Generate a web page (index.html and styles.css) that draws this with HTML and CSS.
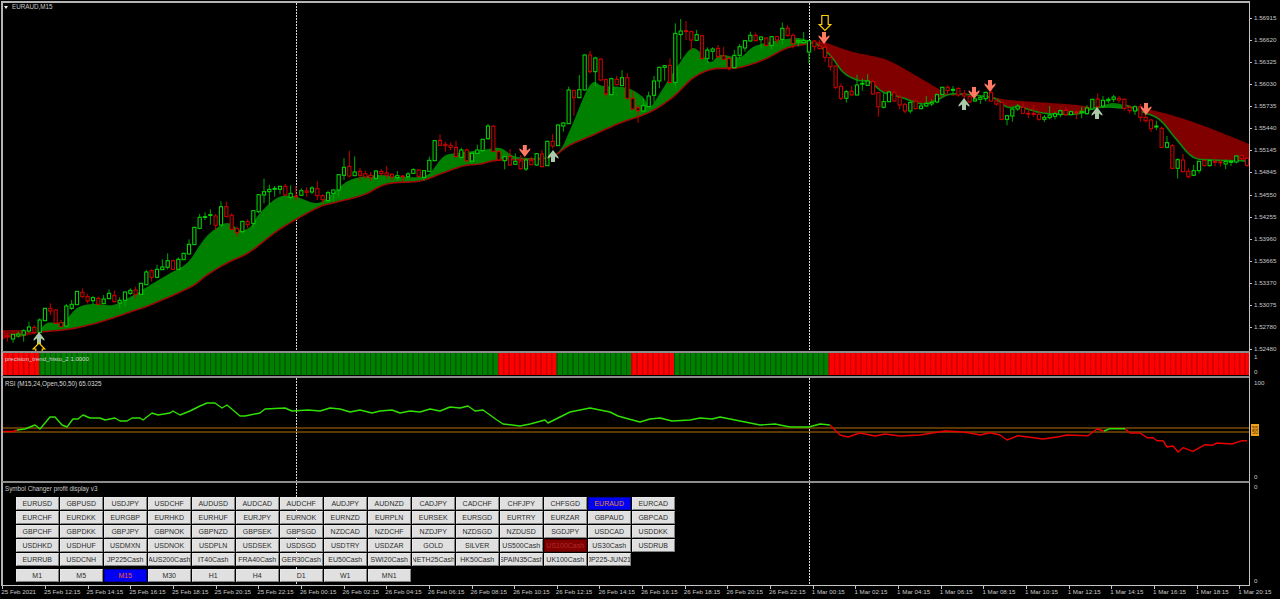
FILE: index.html
```html
<!DOCTYPE html>
<html lang="en">
<head>
<meta charset="utf-8">
<title>EURAUD,M15</title>
<link rel="stylesheet" href="styles.css">
</head>
<body>
<main class="terminal">
  <section class="pane pane-main">
    <div class="plot plot-main">
      <div class="vline vline-a"></div><div class="vline vline-b"></div>
      <svg class="canvas" id="price" width="1246" height="348" viewBox="3 3 1246 348"></svg>
      <div class="chart-title"><span class="chart-caret"></span>EURAUD,M15</div>
    </div>
    <div class="axis axis-price">
      <div class="price">1.56915</div><div class="price">1.56620</div><div class="price">1.56325</div><div class="price">1.56030</div>
      <div class="price">1.55735</div><div class="price">1.55440</div><div class="price">1.55145</div><div class="price">1.54845</div>
      <div class="price">1.54550</div><div class="price">1.54255</div><div class="price">1.53960</div><div class="price">1.53665</div>
      <div class="price">1.53370</div><div class="price">1.53075</div><div class="price">1.52780</div><div class="price">1.52480</div>
    </div>
  </section>

  <section class="pane pane-histo">
    <div class="plot plot-histo">
      <svg class="canvas" id="histo" width="1246" height="22" viewBox="3 353 1246 22"></svg>
      <div class="sub-title sub-title-tight">precision_trend_histo_2 1.0000</div>
    </div>
    <div class="axis axis-histo"><div class="price">1</div><div class="price">0</div></div>
  </section>

  <section class="pane pane-rsi">
    <div class="plot plot-rsi">
      <div class="vline vline-a"></div><div class="vline vline-b"></div>
      <svg class="canvas" id="rsi" width="1246" height="103" viewBox="3 378 1246 103"></svg>
      <div class="sub-title">RSI (M15,24,Open,50,50) 65.0325</div>
    </div>
    <div class="axis axis-pair">
      <div class="price">100</div><div class="price">0</div>
      <div class="level-tag"><span>55</span><span>50</span></div>
    </div>
  </section>

  <section class="pane pane-panel">
    <div class="plot plot-panel">
      <div class="vline vline-a"></div><div class="vline vline-b"></div>
      <div class="panel-title">Symbol Changer profit display v3</div>
      <div class="btn-grid">
        <div class="btn">EURUSD</div><div class="btn">GBPUSD</div><div class="btn">USDJPY</div><div class="btn">USDCHF</div><div class="btn">AUDUSD</div><div class="btn">AUDCAD</div><div class="btn">AUDCHF</div><div class="btn">AUDJPY</div><div class="btn">AUDNZD</div><div class="btn">CADJPY</div><div class="btn">CADCHF</div><div class="btn">CHFJPY</div><div class="btn">CHFSGD</div><div class="btn btn-blue">EURAUD</div><div class="btn">EURCAD</div>
        <div class="btn">EURCHF</div><div class="btn">EURDKK</div><div class="btn">EURGBP</div><div class="btn">EURHKD</div><div class="btn">EURHUF</div><div class="btn">EURJPY</div><div class="btn">EURNOK</div><div class="btn">EURNZD</div><div class="btn">EURPLN</div><div class="btn">EURSEK</div><div class="btn">EURSGD</div><div class="btn">EURTRY</div><div class="btn">EURZAR</div><div class="btn">GBPAUD</div><div class="btn">GBPCAD</div>
        <div class="btn">GBPCHF</div><div class="btn">GBPDKK</div><div class="btn">GBPJPY</div><div class="btn">GBPNOK</div><div class="btn">GBPNZD</div><div class="btn">GBPSEK</div><div class="btn">GBPSGD</div><div class="btn">NZDCAD</div><div class="btn">NZDCHF</div><div class="btn">NZDJPY</div><div class="btn">NZDSGD</div><div class="btn">NZDUSD</div><div class="btn">SGDJPY</div><div class="btn">USDCAD</div><div class="btn">USDDKK</div>
        <div class="btn">USDHKD</div><div class="btn">USDHUF</div><div class="btn">USDMXN</div><div class="btn">USDNOK</div><div class="btn">USDPLN</div><div class="btn">USDSEK</div><div class="btn">USDSGD</div><div class="btn">USDTRY</div><div class="btn">USDZAR</div><div class="btn">GOLD</div><div class="btn">SILVER</div><div class="btn">US500Cash</div><div class="btn btn-maroon">US100Cash</div><div class="btn">US30Cash</div><div class="btn">USDRUB</div>
        <div class="btn">EURRUB</div><div class="btn">USDCNH</div><div class="btn">JP225Cash</div><div class="btn">AUS200Cash</div><div class="btn">IT40Cash</div><div class="btn">FRA40Cash</div><div class="btn">GER30Cash</div><div class="btn">EU50Cash</div><div class="btn">SWI20Cash</div><div class="btn">NETH25Cash</div><div class="btn">HK50Cash</div><div class="btn">SPAIN35Cash</div><div class="btn">UK100Cash</div><div class="btn">JP225-JUN21</div>
      </div>
      <div class="btn-grid btn-grid-tf">
        <div class="btn">M1</div><div class="btn">M5</div><div class="btn btn-blue btn-hot">M15</div><div class="btn">M30</div><div class="btn">H1</div><div class="btn">H4</div><div class="btn">D1</div><div class="btn">W1</div><div class="btn">MN1</div>
      </div>
    </div>
    <div class="axis axis-pair"><div class="price">0</div><div class="price">0</div></div>
  </section>

  <footer class="time-axis">
    <div class="time">25 Feb 2021</div><div class="time">25 Feb 12:15</div><div class="time">25 Feb 14:15</div><div class="time">25 Feb 16:15</div><div class="time">25 Feb 18:15</div><div class="time">25 Feb 20:15</div><div class="time">25 Feb 22:15</div>
    <div class="time">26 Feb 00:15</div><div class="time">26 Feb 02:15</div><div class="time">26 Feb 04:15</div><div class="time">26 Feb 06:15</div><div class="time">26 Feb 08:15</div><div class="time">26 Feb 10:15</div><div class="time">26 Feb 12:15</div><div class="time">26 Feb 14:15</div><div class="time">26 Feb 16:15</div><div class="time">26 Feb 18:15</div><div class="time">26 Feb 20:15</div><div class="time">26 Feb 22:15</div>
    <div class="time">1 Mar 00:15</div><div class="time">1 Mar 02:15</div><div class="time">1 Mar 04:15</div><div class="time">1 Mar 06:15</div><div class="time">1 Mar 08:15</div><div class="time">1 Mar 10:15</div><div class="time">1 Mar 12:15</div><div class="time">1 Mar 14:15</div><div class="time">1 Mar 16:15</div><div class="time">1 Mar 18:15</div><div class="time">1 Mar 20:15</div>
  </footer>
</main>
<script src="chart.js"></script>
</body>
</html>
```
FILE: styles.css
```css
* { box-sizing: border-box; }
html, body { margin: 0; padding: 0; background: #000; overflow: hidden; }
body { font-family: "Liberation Sans", Arial, sans-serif; color: #c8c8c8; }

.terminal { width: 1280px; height: 599px; padding-top: 1px; display: flex; flex-direction: column; }
.pane { display: flex; flex: none; }
.pane-main { height: 350px; }
.pane-histo { height: 25px; }
.pane-rsi { height: 105px; }
.pane-panel { height: 105px; }

.plot {
  width: 1249px; margin-left: 1px; position: relative; overflow: hidden;
  border-left: 2px solid #b4b4b4; border-right: 1px solid #c4c4c4; border-top: 2px solid #8c8c8c;
}
.plot-main { border-top-color: #b4b4b4; }
.plot-panel { border-bottom: 1px solid #c4c4c4; }
.canvas { display: block; position: relative; }

.axis { width: 30px; flex: none; font-size: 6.2px; position: relative; }
.price { white-space: nowrap; padding-left: 4px; position: relative; }
.axis-price { padding-top: 6px; }
.axis-price .price { height: 22.07px; line-height: 22.07px; }
.axis-price .price::before {
  content: ""; position: absolute; left: 0; top: 11px; width: 2px; height: 1px; background: #c4c4c4;
}
.axis-histo { display: flex; flex-direction: column; gap: 3px; line-height: 12px; }
.axis-pair { display: flex; flex-direction: column; gap: 82px; line-height: 12px; padding-top: 0; }
.pane-rsi .axis-pair { padding-top: 1px; }
.level-tag {
  position: absolute; left: 1px; top: 48px; width: 8px; height: 12px; background: #f0a018;
  display: flex; flex-direction: column; align-items: center; justify-content: center;
  color: #5a3a00; font-size: 5.5px; line-height: 4.5px;
}

.chart-title { position: absolute; left: 1px; top: 0; line-height: 8px; font-size: 6.3px; display: flex; align-items: center; gap: 4px; white-space: nowrap; }
.chart-caret { width: 0; height: 0; border-left: 2.5px solid transparent; border-right: 2.5px solid transparent; border-top: 3px solid #eee; }
.sub-title { position: absolute; left: 2px; top: 2px; line-height: 8px; font-size: 6.3px; color: #d8d8d8; white-space: nowrap; }
.sub-title-tight { font-size: 6px; }

.vline {
  position: absolute; top: 0; bottom: 0; width: 1px;
  background: repeating-linear-gradient(to bottom, #d8d8d8 0 2px, transparent 2px 3px);
}
.vline-a { left: 293px; }
.vline-b { left: 806px; }

.panel-title { position: relative; margin-top: 2px; padding-left: 2px; line-height: 8px; font-size: 6.3px; white-space: nowrap; }
.btn-grid { position: relative; margin: 4px 0 0 12.5px; display: grid; grid-template-columns: repeat(15, 44px); grid-auto-rows: 14px; }
.btn-grid-tf { margin-top: 2px; }
.btn {
  margin: 0 .6px .6px 0; background: #e0e0e0; color: #2c2c2c; font-size: 7px; line-height: 11px;
  border: 1px solid; border-color: #e8e8e8 #808080 #808080 #e8e8e8;
  display: flex; justify-content: center; overflow: hidden; white-space: nowrap;
}
.btn-blue { background: #0000f4; border-color: #0000a8; color: #e08a30; }
.btn-hot { color: #ff5a1e; }
.btn-maroon { background: #800000; border-color: #580000; color: #b42a2a; }

.time-axis { height: 13px; flex: none; display: flex; padding-left: 1.3px; }
.time { width: 42.667px; flex: none; position: relative; white-space: nowrap; font-size: 6.2px; line-height: 11px; padding-top: 0; }
.time::before { content: ""; position: absolute; left: 1px; top: 0; width: 1px; height: 2.5px; background: #c4c4c4; }

/* chart drawing */
.cloud-up { fill: #008000; }
.cloud-down { fill: #800000; }
.edge { fill: none; stroke-width: 1.6; stroke-linejoin: round; }
.edge-slow { stroke: #9c0808; }
.edge-fast { stroke: #0a8c0a; }
.wick-up { stroke: #00a800; stroke-width: 1; }
.wick-down { stroke: #c80000; stroke-width: 1; }
.body-up { fill: #000; stroke: #00d800; stroke-width: 1.05; }
.body-down { fill: #000; stroke: #d00000; stroke-width: 1.05; }
.arrow-sell { fill: #ff7a62; }
.arrow-buy { fill: #a9c9a9; }
.arrow-signal { fill: none; stroke: #ffd000; stroke-width: 1.2; }
.bar-up { fill: #008000; }
.bar-up-shade { fill: #005a00; }
.bar-down { fill: #ff0000; }
.bar-down-shade { fill: #c40000; }
.level { stroke: #b87000; stroke-width: 1.2; }
.rsi-up { fill: none; stroke: #30e000; stroke-width: 1.4; stroke-linejoin: round; }
.rsi-down { fill: none; stroke: #e80000; stroke-width: 1.4; stroke-linejoin: round; }
```
FILE: chart.js
```js
var NS = "http://www.w3.org/2000/svg";
function el(parent, name, cls, attrs) {
  var n = document.createElementNS(NS, name);
  if (cls) n.setAttribute("class", cls);
  for (var k in attrs) n.setAttribute(k, attrs[k]);
  parent.appendChild(n);
  return n;
}
function pts(a) { return a.map(function (p) { return p[0] + "," + p[1]; }).join(" "); }

/* Catmull-Rom resampling: turns the measured key points into a smooth curve */
function smooth(a) {
  var out = [];
  for (var i = 0; i < a.length - 1; i++) {
    var p0 = a[Math.max(i - 1, 0)], p1 = a[i], p2 = a[i + 1], p3 = a[Math.min(i + 2, a.length - 1)];
    var n = Math.max(2, Math.round((p2[0] - p1[0]) / 2.5));
    for (var s = 0; s < n; s++) {
      var t = s / n, t2 = t * t, t3 = t2 * t;
      var f = function (q0, q1, q2, q3) {
        return 0.5 * (2 * q1 + (q2 - q0) * t + (2 * q0 - 5 * q1 + 4 * q2 - q3) * t2 + (3 * q1 - q0 - 3 * q2 + q3) * t3);
      };
      out.push([+f(p0[0], p1[0], p2[0], p3[0]).toFixed(1), +f(p0[1], p1[1], p2[1], p3[1]).toFixed(1)]);
    }
  }
  out.push(a[a.length - 1]);
  return out;
}

/* --- trend cloud --- */
var slow = smooth([[38,333],[43,331.7],[70,329],[100,322],[130,312],[150,305],[190,287.3],[207,275],[227,263],[250,251.7],[280,229],[317,208],[333,203],[363,195],[387,184],[420,181],[440,174],[463,166],[480,164],[500,160],[547,158],[570,145],[593,135],[620,123],[650,112],[673,97],[693,78],[713,69],[737,68],[763,60],[787,48],[807,44],[815,43]]);
var fast = smooth([[38,333],[47,323],[63,322],[77,308],[93,304],[113,305],[130,297],[147,287],[167,275],[187,263],[200,245],[210,233],[227,223],[240,230],[250,227],[260,213],[277,198],[293,196],[317,203],[333,193],[350,180],[377,175],[403,177],[427,175],[443,157],[457,153],[483,150],[500,148],[517,157],[547,157],[560,150],[570,130],[590,85],[603,86],[627,88],[643,97],[650,107],[662,90],[677,67],[693,48],[710,62],[720,55],[740,57],[753,47],[770,42],[797,38],[815,43]]);
var downLow = smooth([[815,43],[830,55],[843,72],[857,80],[870,82],[883,92],[903,98],[923,104],[937,100],[947,95],[960,94],[993,98],[1007,107],[1020,107],[1043,113],[1077,114],[1093,108]]);
var downHigh = smooth([[815,43],[823,42],[853,52],[887,60],[920,78],[950,95],[960,94],[993,97],[1010,100],[1077,105],[1093,108]]);
var midHigh = smooth([[1093,108],[1105,105],[1113,103],[1125,105]]);
var midLow = smooth([[1093,108],[1110,107],[1123,108],[1125,105]]);
var tailHigh = smooth([[1125,105],[1160,112],[1193,122],[1227,135],[1249,144]]);
var tailLow = smooth([[1125,105],[1143,112],[1160,120],[1177,140],[1193,157],[1213,160],[1249,161]]);
var startCloud = [[3,330],[20,330],[38,333],[20,337],[3,338]];

function band(svg, cls, top, bottom) {
  el(svg, "polygon", cls, { points: pts(top.concat(bottom.slice().reverse())) });
}

/* --- candles: [x, bodyTop, bodyBottom, high, low, up], measured at 3x --- */
var candleSets = [
  [0, 180, [[7,455,475,455,475,0],[22,468,470,460,485,0],[39,463,477,463,488,1],[55,462,468,455,473,1],[71,452,465,448,485,1],[87,441,453,425,458,1],[103,442,458,435,460,0],[119,420,457,415,460,1],[135,385,422,383,424,1],[151,385,393,370,405,0],[167,390,430,388,432,0],[183,428,440,420,441,0],[199,378,438,372,441,1],[215,373,385,360,390,1],[231,334,374,334,375,1],[247,337,350,325,353,0],[263,350,363,342,370,0],[279,353,362,348,375,1],[295,355,373,350,376,0],[311,357,371,345,373,1],[327,340,356,328,358,1],[343,346,365,332,368,0],[359,361,369,352,385,1],[375,336,361,334,380,1],[391,331,340,325,345,1],[407,330,343,320,355,0],[423,310,343,308,345,1],[439,276,314,270,316,1],[455,272,292,268,305,0],[471,268,292,254,295,1],[487,261,269,238,270,1],[503,242,262,220,268,1],[519,242,268,238,270,0],[535,238,268,232,270,1],[551,220,239,218,240,1],[567,193,222,178,224,1],[583,142,194,140,195,1],[599,112,145,102,148,1],[615,110,112,97,120,1],[631,104,106,88,134,1],[647,108,136,102,150,0],[663,80,135,64,140,1],[679,80,110,65,112,0],[695,106,148,100,150,0],[711,146,158,140,170,0],[727,124,155,122,160,1],[743,125,134,118,145,0]]],
  [250, 100, [[10,332,370,330,382,1],[26,284,335,282,340,1],[42,275,285,236,310,1],[58,268,275,254,315,1],[74,265,268,258,290,1],[90,259,268,257,283,1],[106,259,285,252,288,0],[122,280,292,256,298,1],[138,288,290,258,302,0],[154,272,286,265,288,1],[170,273,277,262,290,0],[186,264,276,258,282,1],[202,266,287,244,300,0],[218,287,299,283,310,0],[234,278,302,272,305,1],[250,270,280,268,305,1],[266,224,270,222,290,1],[282,202,226,174,240,1],[298,199,228,152,232,0],[314,216,227,169,228,1],[330,214,226,204,242,0],[346,221,231,212,235,0],[362,226,233,216,243,0],[378,213,235,211,236,1],[394,214,221,208,228,0],[410,219,226,198,236,0],[426,223,231,220,242,0],[442,227,233,213,242,1],[458,228,229,225,246,0],[474,222,230,216,236,1],[490,209,220,205,222,1],[506,210,229,208,232,0],[522,212,232,210,242,1],[538,181,214,170,216,1],[554,122,182,120,184,1],[570,121,136,103,138,0],[586,133,137,125,155,0],[602,136,142,127,150,0],[618,142,170,122,172,0],[634,150,172,143,174,1],[650,150,182,146,185,0],[666,160,183,156,185,1],[682,150,160,134,162,1],[698,118,152,116,155,1],[714,78,116,72,120,1],[730,79,154,75,156,0],[746,155,180,150,182,0]]],
  [480, 10, [[74,440,452,437,478,1],[90,440,465,417,468,0],[106,454,463,430,465,1],[122,453,476,435,478,0],[138,450,477,445,483,1],[154,452,464,440,466,0],[170,431,465,430,467,1],[186,432,470,420,472,0],[202,394,467,392,468,1],[218,394,408,372,415,0],[234,345,407,342,408,1],[250,339,348,336,365,1],[266,240,341,230,342,1],[282,241,263,240,317,0],[298,239,263,195,265,1],[314,135,240,133,242,1],[330,135,185,123,190,0],[346,144,185,140,230,1],[362,147,210,145,212,0],[378,209,252,205,260,0],[394,206,254,203,255,1],[410,208,224,197,226,0],[426,203,227,180,228,1],[442,203,265,190,268,0],[458,265,297,245,299,0],[474,293,302,285,338,0],[490,287,303,265,305,1],[506,258,290,245,291,1],[522,213,256,198,280,1],[538,172,213,170,235,1],[554,167,172,165,212,1],[570,166,217,145,219,0],[586,70,217,40,232,1],[602,63,74,27,148,1],[618,62,64,33,90,0],[634,65,90,62,122,0],[650,74,91,60,93,1],[666,77,145,75,148,0],[682,120,146,112,160,1],[698,117,124,112,150,1],[714,115,140,105,145,0]]],
  [720, 0, [[11,168,178,140,180,0],[27,176,202,170,212,0],[43,166,203,150,205,1],[59,140,166,132,178,1],[75,122,144,120,155,1],[91,106,123,95,125,1],[107,106,122,98,124,0],[123,111,119,108,146,1],[139,114,136,112,140,0],[155,110,136,108,148,1],[171,110,120,107,130,0],[187,85,118,68,135,1],[203,85,107,76,109,0],[219,106,130,100,145,0],[235,122,126,115,140,1],[251,122,128,96,130,1],[267,122,156,120,190,1],[283,123,140,120,152,0],[299,138,146,120,148,0],[315,142,172,120,185,0],[331,173,200,165,212,0],[347,198,262,195,268,0],[363,259,295,250,300,0],[379,275,295,270,308,1],[395,274,285,258,286,0],[411,255,285,224,286,1],[427,250,252,235,272,1],[443,243,256,222,258,1],[459,245,282,238,285,0],[475,278,320,275,350,0],[491,305,322,278,325,1],[507,276,305,272,307,1],[523,278,303,272,306,0],[539,292,315,285,328,0],[555,313,333,308,340,0],[571,307,333,305,340,1],[587,305,326,298,328,0],[603,318,326,308,328,1],[619,310,318,288,320,1],[635,307,312,298,318,1],[651,284,306,280,310,1],[667,262,284,260,286,1],[683,262,272,256,284,0],[699,268,271,258,282,1],[715,265,285,263,290,0]]],
  [960, 0, [[13,281,288,270,300,0],[29,290,306,284,308,0],[45,297,303,285,306,1],[61,292,298,288,312,1],[77,277,296,275,304,1],[93,278,303,265,305,0],[109,303,312,297,318,0],[125,308,358,305,360,0],[141,347,358,345,376,1],[157,327,348,323,365,1],[173,318,327,312,332,1],[189,322,340,308,342,0],[205,340,342,325,354,0],[221,340,343,315,350,0],[237,343,358,335,362,0],[253,352,358,345,366,1],[269,345,353,318,358,1],[285,341,349,335,358,1],[301,332,344,328,352,1],[317,331,344,322,348,0],[333,335,344,332,346,1],[349,336,339,330,358,0],[365,334,338,320,355,1],[381,324,341,316,345,1],[397,298,327,296,330,1],[413,297,320,280,326,0],[429,301,318,288,322,1],[445,298,302,292,310,1],[461,291,298,285,306,1],[477,295,300,288,308,0],[493,298,325,295,332,0],[509,322,332,315,340,0],[525,320,333,316,345,1],[541,320,352,312,365,0],[557,352,362,340,368,0],[573,360,386,356,396,0],[589,378,381,362,390,1],[605,385,442,380,444,0],[621,428,442,408,445,1],[637,437,505,432,508,0],[653,479,505,475,536,1],[669,480,515,462,517,0],[685,514,530,505,535,0],[701,512,526,495,528,1],[717,484,512,482,520,1],[733,482,497,478,500,0],[749,482,497,480,499,1],[765,484,487,478,498,0],[781,486,488,480,500,0],[797,484,492,478,507,1],[813,484,487,480,498,1],[829,468,486,465,490,1],[845,467,475,464,480,0],[861,475,496,472,500,0]]]
];

function drawCandles(svg) {
  candleSets.forEach(function (set) {
    var ox = set[0], oy = set[1];
    set[2].forEach(function (c) {
      var x = ox + c[0] / 3, t = oy + c[1] / 3, b = oy + c[2] / 3;
      var h = oy + c[3] / 3, l = oy + c[4] / 3, dir = c[5] ? "up" : "down";
      el(svg, "line", "wick-" + dir, { x1: x, x2: x, y1: h, y2: l });
      el(svg, "rect", "body-" + dir, { x: x - 1.6, y: t, width: 3.2, height: Math.max(b - t, 0.8) });
    });
  });
}

/* --- signal arrows: swept head, heavy stem --- */
function sell(svg, x, y) {
  el(svg, "polygon", "arrow-sell", { points: pts([[x-2,y],[x+2,y],[x+2,y+5.6],[x+5.4,y+3.2],[x+5.4,y+5],[x,y+12],[x-5.4,y+5],[x-5.4,y+3.2],[x-2,y+5.6]]) });
}
function buy(svg, x, y) {
  el(svg, "polygon", "arrow-buy", { points: pts([[x-2,y+12],[x+2,y+12],[x+2,y+6.4],[x+5.4,y+8.8],[x+5.4,y+7],[x,y],[x-5.4,y+7],[x-5.4,y+8.8],[x-2,y+6.4]]) });
}
function signal(svg, x, y, dir) {
  var shape = [[-3.2,0],[3.2,0],[3.2,9],[5.8,9],[0,15],[-5.8,9],[-3.2,9]];
  el(svg, "polygon", "arrow-signal", { points: pts(shape.map(function (p) { return [x + p[0], y + dir * p[1]]; })) });
}

var price = document.getElementById("price");
el(price, "polygon", "cloud-down", { points: pts(startCloud) });
band(price, "cloud-up", fast, slow);
band(price, "cloud-down", downHigh, downLow);
band(price, "cloud-up", midHigh, midLow);
band(price, "cloud-down", tailHigh, tailLow);
el(price, "polyline", "edge edge-slow", { points: pts(slow) });
el(price, "polyline", "edge edge-fast", { points: pts(downLow.concat(midLow.slice(1), tailLow.slice(1))) });
drawCandles(price);
[[524.8,145],[824,32],[974,87],[990,80],[1146,103]].forEach(function (a) { sell(price, a[0], a[1]); });
[[39,332],[553,150],[964,98],[1097,107]].forEach(function (a) { buy(price, a[0], a[1]); });
signal(price, 825, 15.5, 1);
signal(price, 39, 358, -1);

/* --- trend histogram --- */
var histo = document.getElementById("histo");
var redRanges = [[0,37],[497,555],[631,673],[828,1300]];
function isRed(x) { return redRanges.some(function (r) { return x >= r[0] && x < r[1]; }); }
for (var i = 0; i < 235; i++) {
  var x = 2 + i * 5.3333, mid = x + 2.6, kind = isRed(mid) ? "bar-down" : "bar-up";
  el(histo, "rect", kind, { x: x, y: 353, width: 5.4, height: 22 });
  el(histo, "rect", kind + "-shade", { x: x, y: 353, width: 1.1, height: 22 });
}

/* --- RSI --- */
var rsi = document.getElementById("rsi");
el(rsi, "line", "level", { x1: 3, x2: 1249, y1: 428, y2: 428 });
el(rsi, "line", "level", { x1: 3, x2: 1249, y1: 432, y2: 432 });
var rsiLine = [[3,431.5],[13,431.5],[17,430],[25,429],[35,425],[40,429],[50,417],[55,417],[62,425],[67,427],[73,419],[78,419],[83,415],[90,418],[100,418],[105,420],[115,418],[120,421],[127,421],[132,418],[140,418],[143,420],[152,413],[158,415],[170,413],[173,411],[180,415],[190,411],[200,406],[207,403],[215,403],[222,408],[227,405],[240,416],[245,416],[260,413],[265,409],[285,408],[292,411],[308,410],[320,411],[330,408],[340,409],[350,412],[360,410],[372,413],[380,411],[392,410],[400,413],[410,411],[420,412],[430,409],[440,411],[450,407],[460,408],[468,406],[475,411],[483,410],[490,415],[497,420],[503,424],[512,425],[520,426],[530,424],[545,420],[548,423],[560,417],[570,412],[580,410],[590,408],[600,410],[610,412],[618,416],[625,418],[640,422],[650,419],[660,418],[672,421],[690,420],[700,418],[712,419],[720,417],[730,419],[740,421],[750,423],[760,425],[775,424],[790,427],[809,427],[820,424],[830,425],[840,435],[848,437],[860,433],[875,436],[885,434],[900,436],[920,435],[945,431],[960,431.7],[970,433],[980,435],[990,432.7],[1000,435],[1007,440],[1018,435.7],[1028,437],[1043,439],[1057,437],[1067,435],[1088,435.7],[1097,429],[1104,431],[1110,428.7],[1125,428.7],[1130,433],[1140,433],[1147,437.7],[1153,437.7],[1157,440.7],[1163,440.7],[1167,447],[1173,446],[1178,452],[1183,447.7],[1193,451.3],[1205,444.7],[1212,445.3],[1217,443],[1232,444],[1242,440.7],[1247,440.7]];
function slice(from, to) { return rsiLine.filter(function (p) { return p[0] >= from && p[0] <= to; }); }
el(rsi, "polyline", "rsi-down", { points: pts(slice(0, 17)) });
el(rsi, "polyline", "rsi-up", { points: pts(slice(17, 830)) });
el(rsi, "polyline", "rsi-down", { points: pts(slice(830, 1104)) });
el(rsi, "polyline", "rsi-up", { points: pts(slice(1104, 1125)) });
el(rsi, "polyline", "rsi-down", { points: pts(slice(1125, 1250)) });
```
